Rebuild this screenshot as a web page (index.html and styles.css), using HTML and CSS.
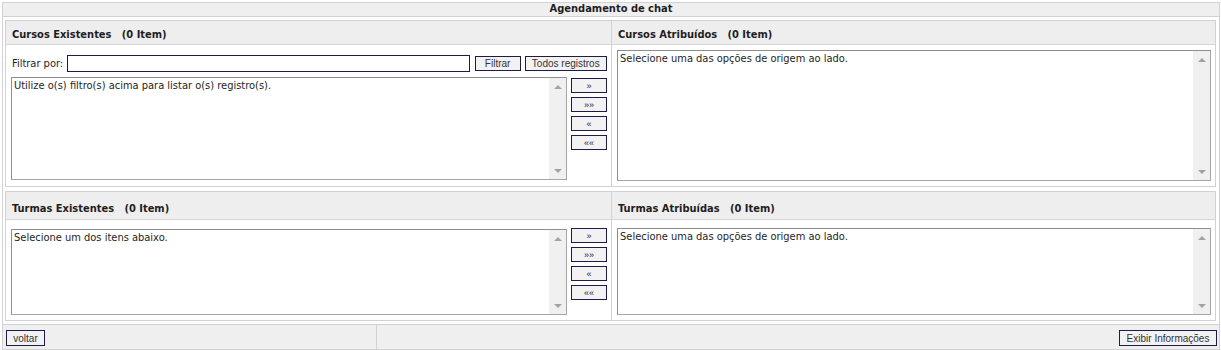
FILE: index.html
```html
<!DOCTYPE html>
<html lang="pt-BR">
<head>
<meta charset="utf-8">
<title>Agendamento de chat</title>
<link rel="stylesheet" href="styles.css">
</head>
<body>
<div class="page">
  <div class="title">Agendamento de chat</div>

  <div class="section s1">
    <div class="col left">
      <div class="head">Cursos Existentes&nbsp;&nbsp;&nbsp;(0 Item)</div>
      <div class="body">
        <div class="filter">
          <span class="label">Filtrar por:</span>
          <span class="field"></span>
          <button class="btn">Filtrar</button>
          <button class="btn">Todos registros</button>
        </div>
        <div class="pick">
          <div class="list">
            <div class="list-text">Utilize o(s) filtro(s) acima para listar o(s) registro(s).</div>
            <div class="scroll"><span class="up"></span><span class="down"></span></div>
          </div>
          <div class="moves">
            <button class="mv">&raquo;</button>
            <button class="mv">&raquo;&raquo;</button>
            <button class="mv">&laquo;</button>
            <button class="mv">&laquo;&laquo;</button>
          </div>
        </div>
      </div>
    </div>
    <div class="col right">
      <div class="head">Cursos Atribuídos&nbsp;&nbsp;&nbsp;(0 Item)</div>
      <div class="body">
        <div class="list">
          <div class="list-text">Selecione uma das opções de origem ao lado.</div>
          <div class="scroll"><span class="up"></span><span class="down"></span></div>
        </div>
      </div>
    </div>
  </div>

  <div class="section s2">
    <div class="col left">
      <div class="head">Turmas Existentes&nbsp;&nbsp;&nbsp;(0 Item)</div>
      <div class="body">
        <div class="pick">
          <div class="list">
            <div class="list-text">Selecione um dos itens abaixo.</div>
            <div class="scroll"><span class="up"></span><span class="down"></span></div>
          </div>
          <div class="moves">
            <button class="mv">&raquo;</button>
            <button class="mv">&raquo;&raquo;</button>
            <button class="mv">&laquo;</button>
            <button class="mv">&laquo;&laquo;</button>
          </div>
        </div>
      </div>
    </div>
    <div class="col right">
      <div class="head">Turmas Atribuídas&nbsp;&nbsp;&nbsp;(0 Item)</div>
      <div class="body">
        <div class="list">
          <div class="list-text">Selecione uma das opções de origem ao lado.</div>
          <div class="scroll"><span class="up"></span><span class="down"></span></div>
        </div>
      </div>
    </div>
  </div>

  <div class="footer">
    <div class="foot-left"><button class="btn">voltar</button></div>
    <div class="foot-right"><button class="btn">Exibir Informações</button></div>
  </div>
</div>
</body>
</html>
```
FILE: styles.css
```css
* { box-sizing: border-box; }

html, body { margin: 0; padding: 0; background: #fff; }

body {
  font-family: "DejaVu Sans Condensed", "DejaVu Sans", sans-serif;
  font-size: 11px;
  color: #1e1e1e;
}

.page {
  margin: 2px 1px 0 2px;
  border: 1px solid #d2d2d2;
  border-bottom: none;
  height: 348px;
  display: flex;
  flex-direction: column;
}

.title {
  height: 14px;
  background: #efefef;
  border-bottom: 1px solid #d2d2d2;
  text-align: center;
  font-weight: bold;
  line-height: 12px;
}

.section {
  margin: 3px 3px 0 2px;
  border: 1px solid #d2d2d2;
  display: grid;
  grid-template-columns: 606px 1fr;
}

.s2 { margin-top: 4px; }

.col { display: flex; flex-direction: column; }
.col.left { border-right: 1px solid #d2d2d2; }

.head {
  background: #eeeeee;
  border-bottom: 1px solid #d6d6d6;
  font-weight: bold;
  padding: 0 6px 4px 6px;
  display: flex;
  align-items: flex-end;
  line-height: 13px;
}
.s1 .head { height: 24px; padding-bottom: 3px; }
.s2 .head { height: 28px; }

.body { display: flex; flex-direction: column; }

.s1 .left .body { padding: 10px 4px 6px 5px; }
.s1 .right .body { padding: 5px 4px 5px 5px; }
.s2 .left .body { padding: 8px 4px 5px 5px; }
.s2 .right .body { padding: 8px 4px 5px 5px; }

.filter {
  display: flex;
  align-items: center;
  height: 17px;
  margin-bottom: 5px;
}
.label { width: 56px; padding-left: 1px; white-space: nowrap; }
.field {
  width: 406px;
  height: 17px;
  border: 1px solid #1f1a48;
  background: #fff;
  margin-right: 5px;
}
.filter .btn + .btn { margin-left: 4px; }
.filter .btn:first-of-type { width: 46px; }
.filter .btn:last-of-type { width: 83px; }

.btn {
  font-family: "Liberation Sans", Arial, sans-serif;
  font-size: 10px;
  color: #333;
  background: #f2f2f2;
  border: 1px solid #1f1a48;
  height: 15px;
  padding: 0 5px;
  line-height: 13px;
  margin: 0;
  white-space: nowrap;
}

.pick { display: flex; gap: 4px; }

.list {
  display: flex;
  border: 1px solid #a6a6a6;
  border-top-color: #8e8e8e;
  border-left-color: #8e8e8e;
  background: #fff;
}
.s1 .left .list { width: 557px; height: 103px; }
.s1 .right .list { height: 131px; }
.s2 .left .list { width: 557px; height: 86px; margin-top: 1px; }
.s2 .right .list { height: 87px; }

.list-text {
  flex: 1;
  padding: 2px 2px;
  line-height: 12px;
}

.scroll {
  width: 17px;
  background: #f0f0f0;
  display: flex;
  flex-direction: column;
  justify-content: space-between;
  align-items: center;
  padding: 7px 0 6px;
}
.up, .down {
  width: 0;
  height: 0;
  border-left: 4px solid transparent;
  border-right: 4px solid transparent;
}
.up { border-bottom: 4px solid #a3a3a3; }
.down { border-top: 4px solid #a3a3a3; }

.moves {
  display: flex;
  flex-direction: column;
  gap: 4px;
  padding-top: 1px;
}
.s2 .moves { padding-top: 0; }

.mv {
  width: 36px;
  height: 15px;
  border: 1px solid #1f1a48;
  background: #f2f2f2;
  color: #1f1a48;
  font-family: "Liberation Sans", Arial, sans-serif;
  font-size: 9px;
  line-height: 12px;
  padding: 0;
  margin: 0;
}

.footer {
  margin-top: 3px;
  border-top: 1px solid #d2d2d2;
  border-bottom: 1px solid #d2d2d2;
  background: #efefef;
  height: 26px;
  display: flex;
}
.foot-left {
  width: 374px;
  border-right: 1px solid #d2d2d2;
  padding: 5px 0 0 3px;
}
.foot-left .btn { width: 39px; height: 16px; padding: 0; }
.foot-right {
  flex: 1;
  display: flex;
  justify-content: flex-end;
  padding: 5px 2px 0 0;
}
.foot-right .btn { width: 98px; height: 16px; padding: 0; }
```
